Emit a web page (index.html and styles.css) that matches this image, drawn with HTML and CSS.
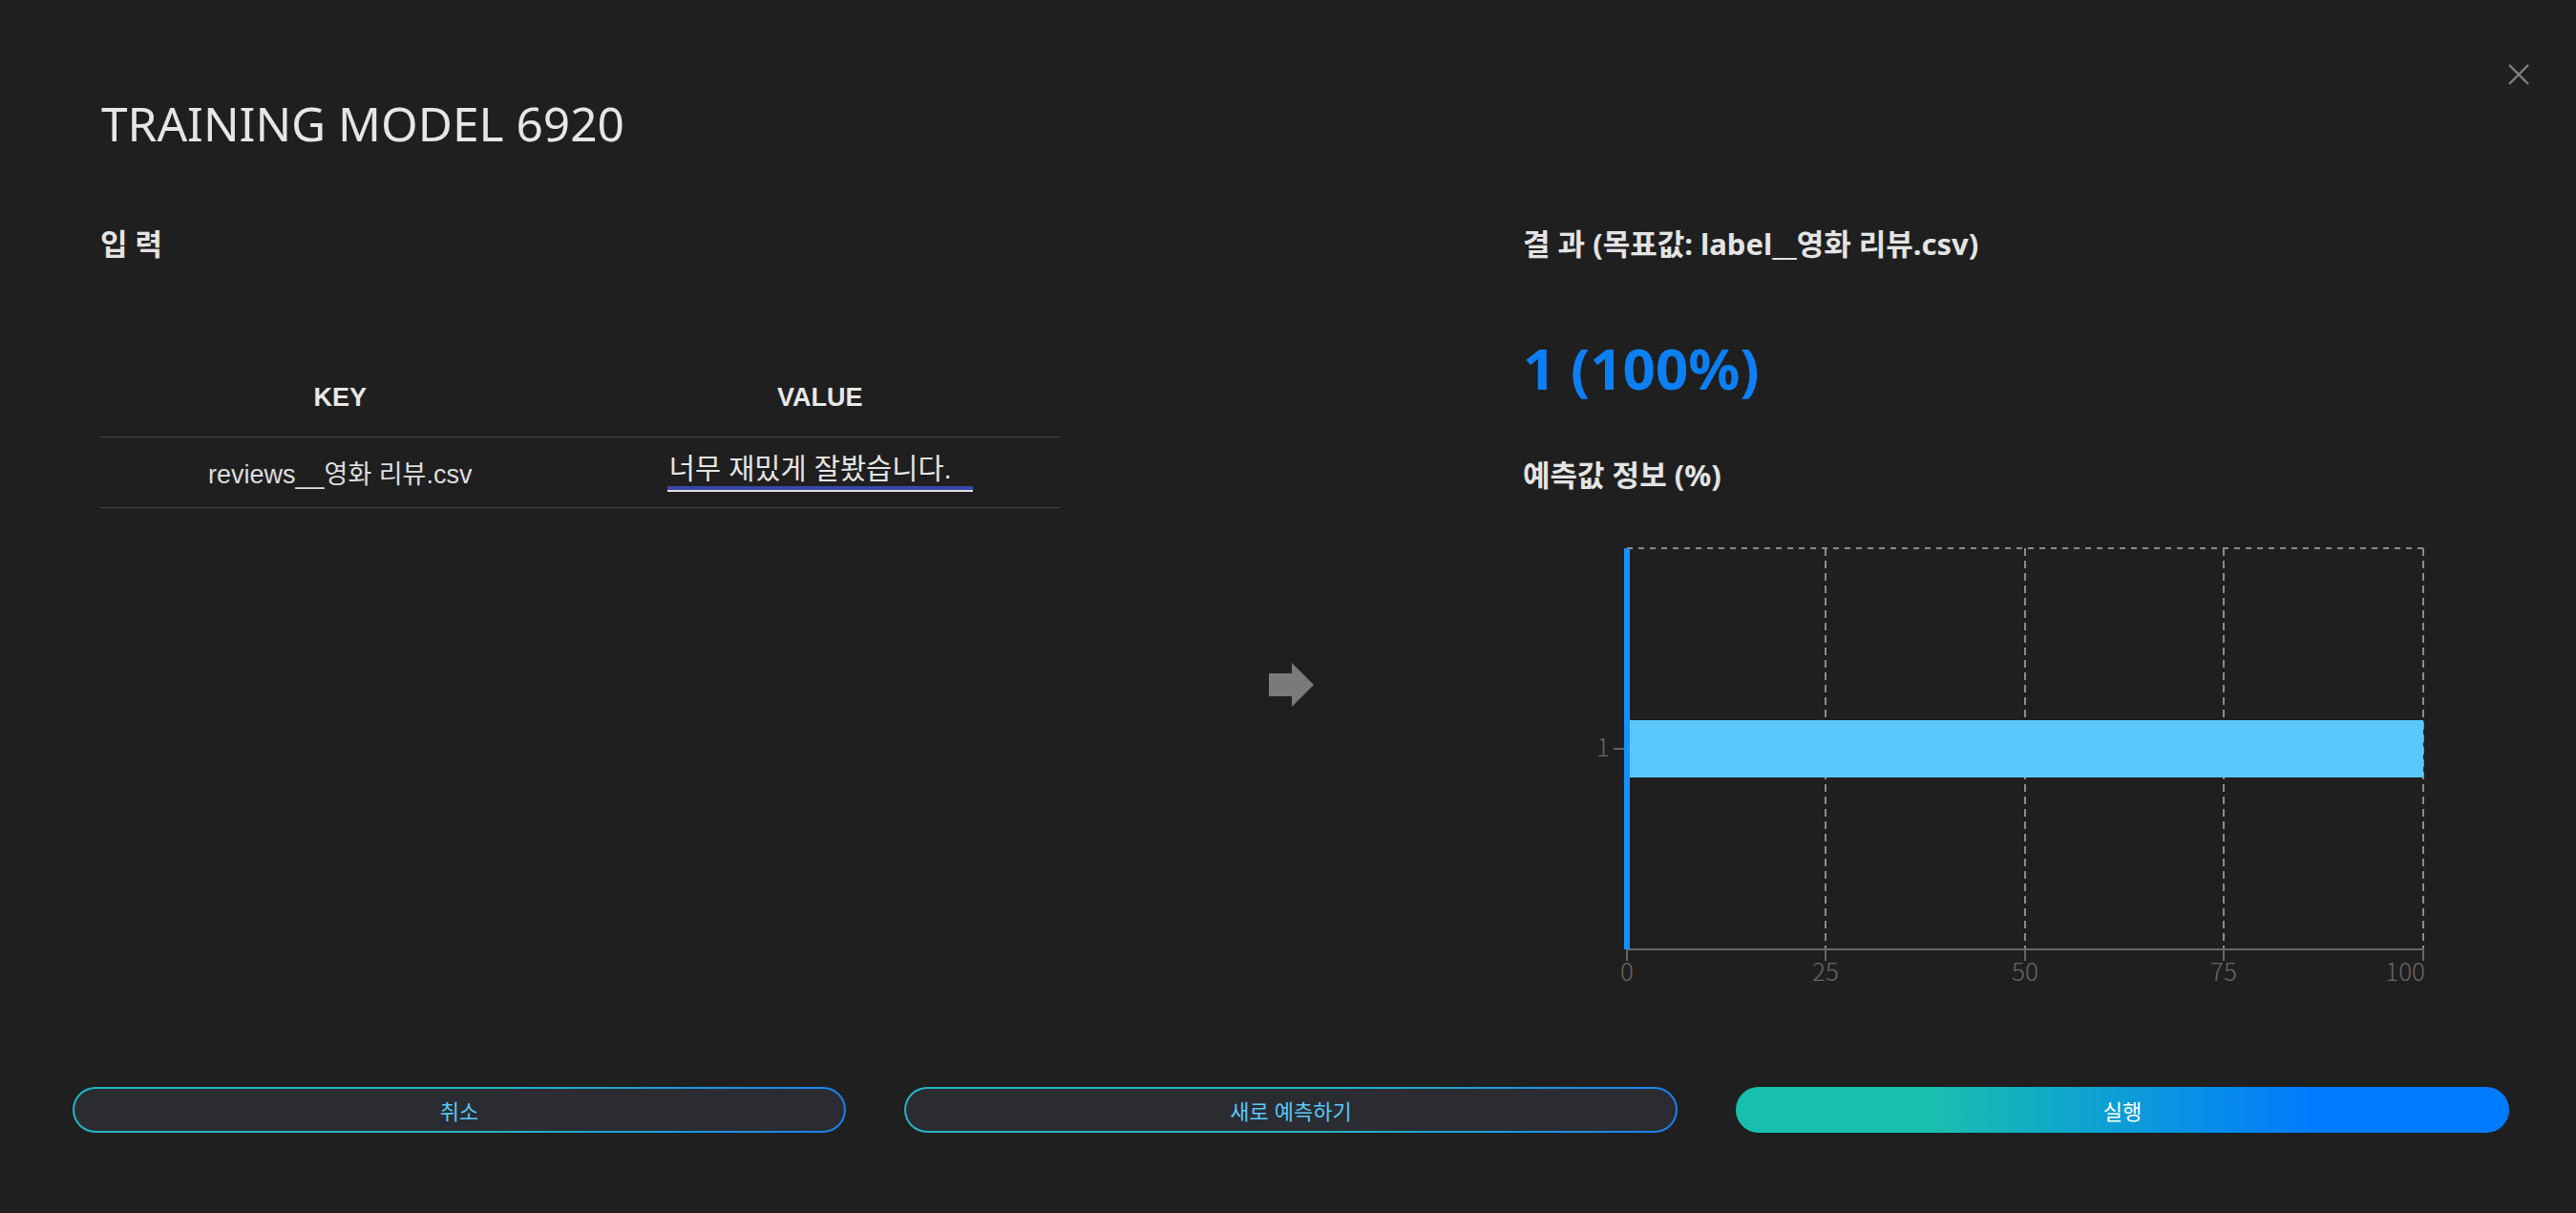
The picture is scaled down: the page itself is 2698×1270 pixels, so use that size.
FILE: index.html
```html
<!DOCTYPE html>
<html lang="ko">
<head>
<meta charset="utf-8">
<title>Training Model 6920</title>
<link rel="stylesheet" href="styles.css">
</head>
<body>
<div class="modal">
  <button class="close" aria-label="닫기">
    <svg width="24" height="24" viewBox="0 0 24 24"><path d="M2 2 L22 22 M22 2 L2 22" stroke="#808080" stroke-width="2.4" fill="none"/></svg>
  </button>
  <h1 class="title">TRAINING MODEL 6920</h1>

  <div class="content">
    <section class="input-col">
      <h2 class="section-title">입 력</h2>
      <table class="kv-table">
        <thead>
          <tr><th>KEY</th><th>VALUE</th></tr>
        </thead>
        <tbody>
          <tr>
            <td>reviews__영화 리뷰.csv</td>
            <td><div class="value-input">너무 재밌게 잘봤습니다.</div></td>
          </tr>
        </tbody>
      </table>
    </section>

    <div class="arrow-col">
      <svg width="47" height="46" viewBox="0 0 47 46"><path d="M0 11 H24 V0 L47 23 L24 46 V35 H0 Z" fill="#7a7a7a"/></svg>
    </div>

    <section class="result-col">
      <h2 class="section-title">결 과 (목표값: label__영화 리뷰.csv)</h2>
      <div class="prediction">1 (100%)</div>
      <h3 class="section-title sub">예측값 정보 (%)</h3>
      <svg class="chart" width="900" height="480" viewBox="0 0 900 480">
        <g stroke="#8c8c8c" stroke-width="2" fill="none">
          <line x1="44" y1="14" x2="878" y2="14" stroke-dasharray="6 6"/>
          <line x1="252" y1="14" x2="252" y2="434" stroke-dasharray="8 5"/>
          <line x1="461" y1="14" x2="461" y2="434" stroke-dasharray="8 5"/>
          <line x1="669" y1="14" x2="669" y2="434" stroke-dasharray="8 5"/>
          <line x1="878" y1="14" x2="878" y2="434" stroke-dasharray="8 5"/>
        </g>
        <rect x="44" y="194" width="834" height="60" fill="#5ac8fa"/>
        <g stroke="#666" stroke-width="2">
          <line x1="44" y1="434" x2="879" y2="434"/>
          <line x1="44" y1="434" x2="44" y2="446"/>
          <line x1="252" y1="434" x2="252" y2="446"/>
          <line x1="461" y1="434" x2="461" y2="446"/>
          <line x1="669" y1="434" x2="669" y2="446"/>
          <line x1="878" y1="434" x2="878" y2="446"/>
          <line x1="30" y1="224" x2="44" y2="224"/>
        </g>
        <rect x="41" y="14" width="6" height="420" fill="#1890ff"/>
        <g class="tick" fill="#666">
          <text x="44" y="467" text-anchor="middle">0</text>
          <text x="252" y="467" text-anchor="middle">25</text>
          <text x="461" y="467" text-anchor="middle">50</text>
          <text x="669" y="467" text-anchor="middle">75</text>
          <text x="880" y="467" text-anchor="end">100</text>
          <text x="26" y="232" text-anchor="end">1</text>
        </g>
      </svg>
    </section>
  </div>

  <div class="actions">
    <button class="btn btn-outline">취소</button>
    <button class="btn btn-outline">새로 예측하기</button>
    <button class="btn btn-primary">실행</button>
  </div>
</div>
</body>
</html>
```

FILE: styles.css
```css
* { box-sizing: border-box; }
html, body {
  margin: 0;
  padding: 0;
  background: #1f1f1f;
}
body {
  font-family: "Noto Sans", "Noto Sans CJK KR", sans-serif;
  color: #e4e4e4;
  width: 2698px;
  height: 1270px;
  overflow: hidden;
}
.modal {
  position: relative;
  padding: 100px 0 0 0;
}
.close {
  position: absolute;
  top: 66px;
  right: 48px;
  width: 24px;
  height: 24px;
  padding: 0;
  border: none;
  background: transparent;
  cursor: pointer;
}
.close svg { display: block; }
.title {
  margin: 0 0 0 106px;
  font-size: 49.6px;
  line-height: 58px;
  font-weight: 400;
  color: #e6e6e6;
  letter-spacing: 0;
}
.content {
  display: grid;
  grid-template-columns: 1005px 485px 1fr;
  padding: 0 100px 0 105px;
  margin-top: 77px;
}
.section-title {
  margin: 0;
  font-size: 31px;
  line-height: 40px;
  font-weight: 700;
  color: #e4e4e4;
}
.kv-table {
  width: 100%;
  margin-top: 101px;
  border-collapse: collapse;
  font-family: "Liberation Sans", "Noto Sans CJK KR", sans-serif;
}
.kv-table th {
  width: 50%;
  height: 81px;
  font-size: 27px;
  font-weight: 700;
  color: #e8e8e8;
  text-align: center;
  vertical-align: middle;
  border-bottom: 1px solid #474747;
  padding: 0;
}
.kv-table td {
  height: 74px;
  font-size: 27px;
  color: #dedede;
  text-align: center;
  vertical-align: middle;
  border-bottom: 1px solid #474747;
  padding: 0;
}
.value-input {
  width: 320px;
  margin: 0 auto;
  text-align: left;
  font-size: 29.5px;
  line-height: 36px;
  padding: 0 0 4px 2px;
  color: #e6e6e6;
  border-bottom: 2px solid #e0e0e0;
  box-shadow: inset 0 -4px 0 #3949ab;
}
.arrow-col {
  display: flex;
  justify-content: center;
  align-items: flex-start;
  padding-top: 459px;
}
.prediction {
  margin-top: 74px;
  font-size: 60px;
  line-height: 72px;
  font-weight: 700;
  color: #0d7ff5;
}
.sub { margin-top: 56px; }
.chart {
  display: block;
  margin: 43px 0 0 65px;
}
.tick text {
  font-family: "Noto Sans CJK KR", "Noto Sans", sans-serif;
  font-size: 26px;
  font-weight: 300;
}
.actions {
  display: grid;
  grid-template-columns: repeat(3, 1fr);
  column-gap: 61px;
  padding: 0 70px 0 76px;
  margin-top: 98px;
}
.btn {
  height: 48px;
  border-radius: 24px;
  font-family: "Noto Sans CJK KR", sans-serif;
  font-size: 22px;
  cursor: pointer;
}
.btn-outline {
  border: 2px solid transparent;
  background:
    linear-gradient(#2a2c31, #2a2c31) padding-box,
    linear-gradient(100deg, #22b5c6 55%, #1a7ff0) border-box;
  color: #5ac8fa;
}
.btn-primary {
  border: none;
  background: linear-gradient(90deg, #19bfae 25%, #007aff 75%);
  color: #ffffff;
}
```
